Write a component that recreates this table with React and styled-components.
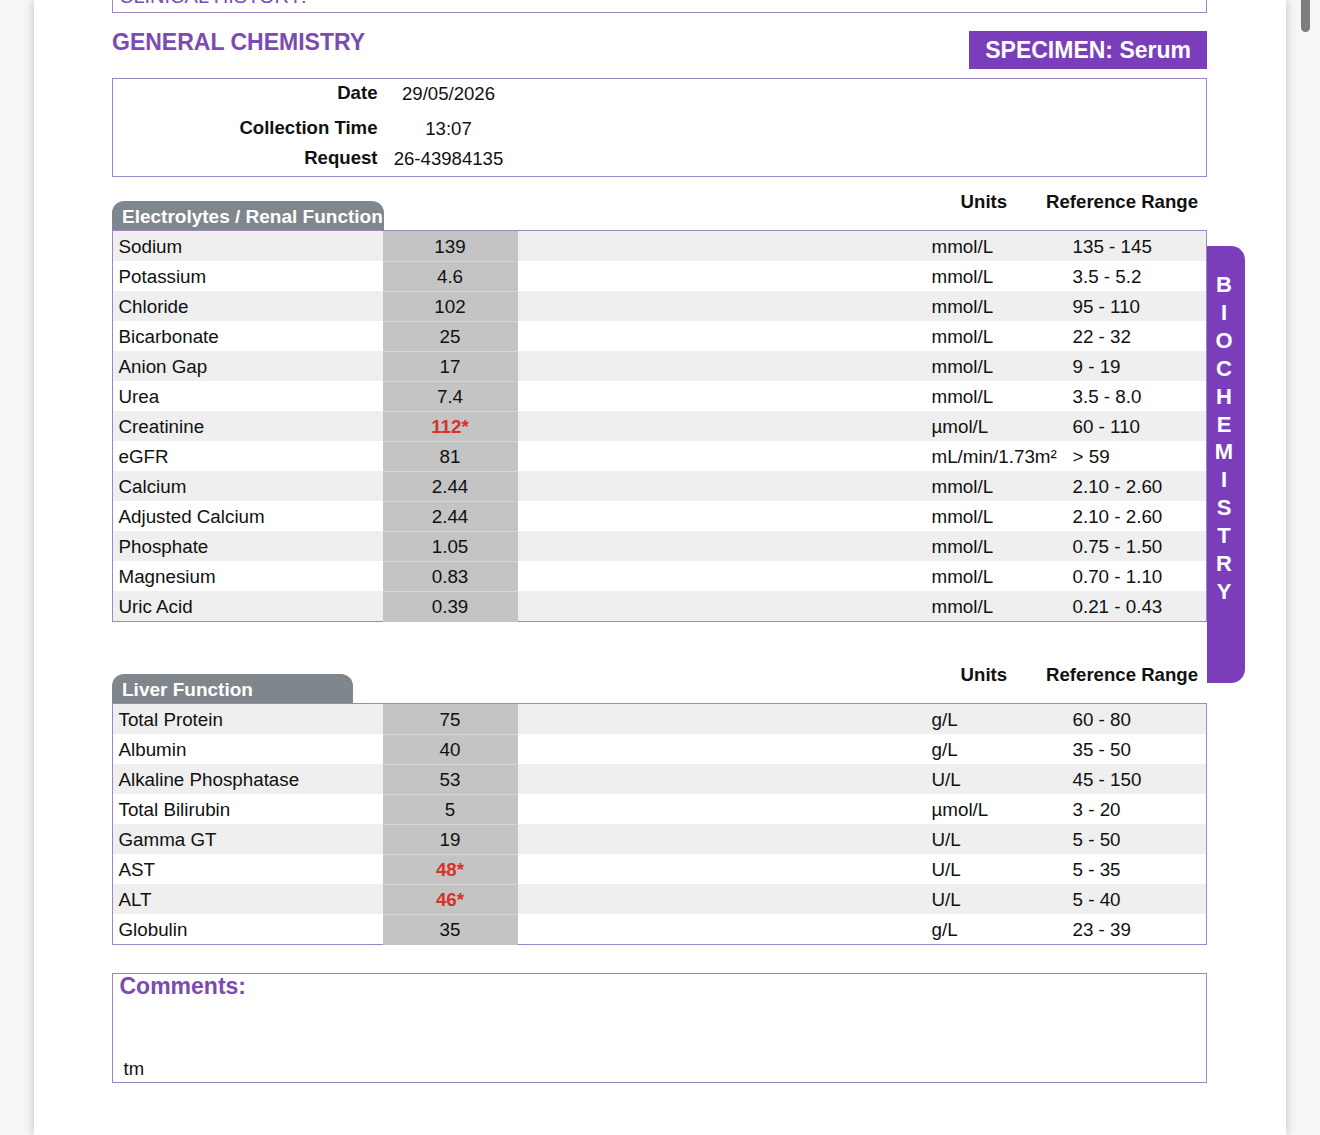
import React from "react";
import styled, { createGlobalStyle } from "styled-components";

const PURPLE = "#7a3eba";
const TITLE = "#7b4bb2";
const LINE = "#9d86c6";
const FONT = `"Liberation Sans", Arial, Helvetica, sans-serif`;

const Global = createGlobalStyle`
  html, body { margin: 0; padding: 0; height: 1135px; overflow: hidden; }
  body { background: #f5f5f5; font-family: ${FONT}; color: #111; }
  * { box-sizing: border-box; }
`;

const Viewer = styled.div`
  display: flex;
  height: 1135px;
  overflow: hidden;
`;

const Gutter = styled.div`
  width: 34px;
  flex: none;
  background: #f6f6f6;
  display: flex;
  justify-content: flex-end;
  padding-right: ${(p) => (p.$right ? "10px" : "0")};
`;

const Thumb = styled.div`
  width: 9px;
  height: 32px;
  background: #7d7d7d;
  border-radius: 0 0 5px 5px;
`;

const Page = styled.div`
  width: 1252px;
  flex: none;
  background: #fff;
  box-shadow: 0 0 9px rgba(0, 0, 0, 0.22);
  padding-left: 78px;
  position: relative;
  z-index: 1;
`;

const Content = styled.div`
  width: 1095px;
  display: flex;
  flex-direction: column;
`;

const ClinicalBox = styled.div`
  margin-top: -28px;
  height: 41px;
  border: 1.5px solid ${LINE};
  padding: 11px 6px 0;
  font-size: 20px;
  line-height: 24px;
  color: ${TITLE};
`;

const TitleRow = styled.div`
  display: flex;
  justify-content: space-between;
  align-items: flex-start;
  margin-top: 16px;
`;

const Title = styled.h2`
  margin: 0;
  font-size: 23px;
  line-height: 27px;
  font-weight: 700;
  color: ${TITLE};
`;

const Specimen = styled.div`
  margin-top: 2px;
  height: 38px;
  padding: 0 16px;
  background: ${PURPLE};
  color: #fff;
  font-size: 23px;
  font-weight: 700;
  line-height: 38px;
`;

const InfoBox = styled.div`
  margin-top: 9px;
  height: 99px;
  border: 1.5px solid ${LINE};
  display: grid;
  grid-template-columns: 264.5px 126px;
  column-gap: 8px;
  align-content: start;
  padding-top: 3px;
`;

const InfoLabel = styled.div`
  margin-top: ${(p) => p.$mt}px;
  text-align: right;
  font-weight: 700;
  font-size: 18.6px;
  line-height: 22px;
`;

const InfoValue = styled.div`
  margin-top: ${(p) => p.$mt + 1}px;
  text-align: center;
  font-size: 18.6px;
  line-height: 22px;
`;

const SectionsRow = styled.div`
  display: flex;
  align-items: flex-start;
  width: calc(100% + 38px);
`;

const Sections = styled.div`
  width: 1095px;
  flex: none;
  display: flex;
  flex-direction: column;
`;

const SideTab = styled.div`
  width: 38px;
  height: 437px;
  margin-top: 69px;
  flex: none;
  background: ${PURPLE};
  border-radius: 0 14px 14px 0;
  display: flex;
  flex-direction: column;
  align-items: center;
  padding: 25px 4px 0 0;
  color: #fff;
  font-weight: 700;
  font-size: 22px;
  line-height: 27.9px;
`;

const Section = styled.section`
  margin-top: ${(p) => p.$mt}px;
  display: flex;
  flex-direction: column;
`;

const SectionHeader = styled.div`
  display: flex;
  align-items: flex-start;
  height: 39px;
`;

const Tab = styled.div`
  width: ${(p) => p.$w}px;
  height: 29px;
  margin-top: 10px;
  background: #7f868c;
  border-radius: 12px 12px 0 0;
  color: #fff;
  font-weight: 700;
  font-size: 19px;
  line-height: 31px;
  padding-left: 10px;
  white-space: nowrap;
  overflow: hidden;
`;

const ColHeads = styled.div`
  margin-left: auto;
  display: flex;
  gap: 39px;
  padding-right: 9px;
  font-weight: 700;
  font-size: 18.6px;
  line-height: 22px;
`;

const Table = styled.div`
  border: 1.5px solid ${LINE};
`;

const Row = styled.div`
  display: grid;
  grid-template-columns: 269.5px 135px 407px 141px 1fr;
  height: 30px;
  background: ${(p) => (p.$odd ? "#efefef" : "#ffffff")};
  font-size: 18.8px;
  line-height: 31px;
`;

const Name = styled.div`
  padding-left: 5.5px;
  white-space: nowrap;
`;

const Value = styled.div`
  background: #c4c4c4;
  text-align: center;
  border-top: ${(p) => (p.$first ? "none" : "1px solid #d6d6d6")};
  line-height: ${(p) => (p.$first ? "31px" : "29px")};
  color: ${(p) => (p.$flag ? "#d8312a" : "#111")};
  font-weight: ${(p) => (p.$flag ? 700 : 400)};
`;

const Cell = styled.div`
  padding-left: 7px;
  white-space: nowrap;
`;

const Comments = styled.div`
  margin-top: 28px;
  height: 110px;
  border: 1.5px solid ${LINE};
  display: flex;
  flex-direction: column;
  justify-content: space-between;
  padding: 0 7px 0 6.5px;
`;

const CommentsTitle = styled.div`
  font-size: 23px;
  font-weight: 700;
  line-height: 25px;
  color: ${TITLE};
`;

const CommentText = styled.div`
  padding-left: 4px;
  font-size: 18.5px;
  line-height: 26px;
`;

const electrolytes = [
  ["Sodium", "139", "mmol/L", "135 - 145"],
  ["Potassium", "4.6", "mmol/L", "3.5 - 5.2"],
  ["Chloride", "102", "mmol/L", "95 - 110"],
  ["Bicarbonate", "25", "mmol/L", "22 - 32"],
  ["Anion Gap", "17", "mmol/L", "9 - 19"],
  ["Urea", "7.4", "mmol/L", "3.5 - 8.0"],
  ["Creatinine", "112*", "µmol/L", "60 - 110", true],
  ["eGFR", "81", "mL/min/1.73m²", "> 59"],
  ["Calcium", "2.44", "mmol/L", "2.10 - 2.60"],
  ["Adjusted Calcium", "2.44", "mmol/L", "2.10 - 2.60"],
  ["Phosphate", "1.05", "mmol/L", "0.75 - 1.50"],
  ["Magnesium", "0.83", "mmol/L", "0.70 - 1.10"],
  ["Uric Acid", "0.39", "mmol/L", "0.21 - 0.43"],
];

const liver = [
  ["Total Protein", "75", "g/L", "60 - 80"],
  ["Albumin", "40", "g/L", "35 - 50"],
  ["Alkaline Phosphatase", "53", "U/L", "45 - 150"],
  ["Total Bilirubin", "5", "µmol/L", "3 - 20"],
  ["Gamma GT", "19", "U/L", "5 - 50"],
  ["AST", "48*", "U/L", "5 - 35", true],
  ["ALT", "46*", "U/L", "5 - 40", true],
  ["Globulin", "35", "g/L", "23 - 39"],
];

function ResultSection({ title, tabWidth, rows, mt }) {
  return (
    <Section $mt={mt}>
      <SectionHeader>
        <Tab $w={tabWidth}>{title}</Tab>
        <ColHeads>
          <span>Units</span>
          <span>Reference Range</span>
        </ColHeads>
      </SectionHeader>
      <Table>
        {rows.map(([name, val, unit, range, flag], i) => (
          <Row key={name} $odd={i % 2 === 0}>
            <Name>{name}</Name>
            <Value $flag={flag} $first={i === 0}>{val}</Value>
            <div />
            <Cell>{unit}</Cell>
            <Cell>{range}</Cell>
          </Row>
        ))}
      </Table>
    </Section>
  );
}

export default function App() {
  return (
    <>
      <Global />
      <Viewer>
        <Gutter />
        <Page>
          <Content>
            <ClinicalBox>CLINICAL HISTORY:</ClinicalBox>
            <TitleRow>
              <Title>GENERAL CHEMISTRY</Title>
              <Specimen>SPECIMEN: Serum</Specimen>
            </TitleRow>
            <InfoBox>
              <InfoLabel $mt={0}>Date</InfoLabel>
              <InfoValue $mt={0}>29/05/2026</InfoValue>
              <InfoLabel $mt={12}>Collection Time</InfoLabel>
              <InfoValue $mt={12}>13:07</InfoValue>
              <InfoLabel $mt={7}>Request</InfoLabel>
              <InfoValue $mt={7}>26-43984135</InfoValue>
            </InfoBox>
            <SectionsRow>
              <Sections>
                <ResultSection
                  mt={14}
                  title="Electrolytes / Renal Function"
                  tabWidth={272}
                  rows={electrolytes}
                />
                <ResultSection
                  mt={42}
                  title="Liver Function"
                  tabWidth={241}
                  rows={liver}
                />
              </Sections>
              <SideTab>
                {"BIOCHEMISTRY".split("").map((c, i) => (
                  <span key={i}>{c}</span>
                ))}
              </SideTab>
            </SectionsRow>
            <Comments>
              <CommentsTitle>Comments:</CommentsTitle>
              <CommentText>tm</CommentText>
            </Comments>
          </Content>
        </Page>
        <Gutter $right>
          <Thumb />
        </Gutter>
      </Viewer>
    </>
  );
}
